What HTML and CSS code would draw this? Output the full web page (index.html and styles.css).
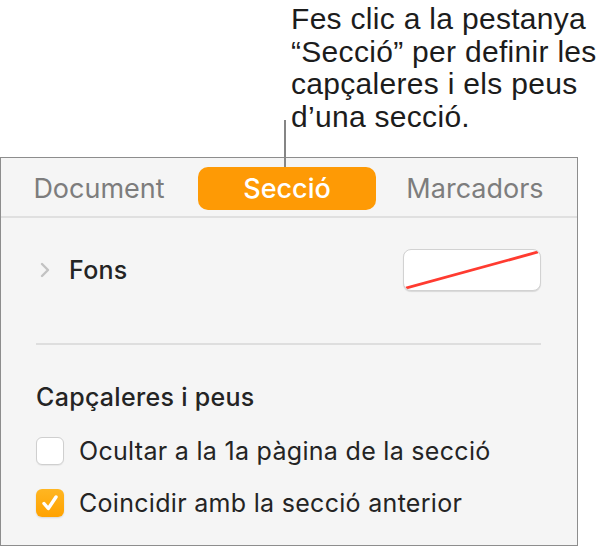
FILE: index.html
```html
<!DOCTYPE HTML>
<html>
<head>
<title>Secció</title>
<link rel="stylesheet" href="styles.css">
</head>
<body>
<div class="page">
  <div class="callout">
    Fes clic a la pestanya<br/>
    “Secció” per definir les<br/>
    capçaleres i els peus<br/>
    d’una secció.
  </div>
  <div class="leader"></div>

  <div class="panel">
    <div class="tabs">
      <div class="tab">Document</div>
      <div class="tab active">Secció</div>
      <div class="tab">Marcadors</div>
    </div>

    <div class="panelBody">
      <div class="fonsRow">
        <span class="chevron">
          <svg width="10" height="16" viewBox="0 0 10 16"><path d="M2 2 L8 8 L2 14" fill="none" stroke="#c2c2c2" stroke-width="2.4" stroke-linecap="round" stroke-linejoin="round"/></svg>
        </span>
        <span class="fonsLabel">Fons</span>
        <span class="swatch">
          <svg width="100%" height="100%" viewBox="0 0 136 40" preserveAspectRatio="none"><line x1="1" y1="39" x2="135" y2="1" stroke="#ff3b30" stroke-width="3"/></svg>
        </span>
      </div>

      <div class="divider"></div>

      <div class="heading">Capçaleres i peus</div>

      <div class="checkRow">
        <span class="box"></span>
        <span>Ocultar a la 1a pàgina de la secció</span>
      </div>
      <div class="checkRow">
        <span class="box checked">
          <svg width="28" height="28" viewBox="0 0 28 28"><path d="M8 14.5 L12.3 19.5 L20 8" fill="none" stroke="#fff" stroke-width="3.4" stroke-linecap="round" stroke-linejoin="round"/></svg>
        </span>
        <span>Coincidir amb la secció anterior</span>
      </div>
    </div>
  </div>
</div>
</body>
</html>
```

FILE: styles.css
```css
body {
  margin: 0;
  background: #ffffff;
}

.page {
  position: relative;
  width: 601px;
  height: 548px;
}

.callout {
  margin-left: 291px;
  padding-top: 3px;
  font-family: "Liberation Sans", Arial, sans-serif;
  font-size: 30px;
  line-height: 32.5px;
  letter-spacing: 0.3px;
  color: #1c1c1c;
}

/* the pointer from the callout down to the tab */
.leader {
  position: absolute;
  left: 284px;
  top: 120px;
  width: 2px;
  height: 47px;
  background: #858585;
  z-index: 2;
}

.panel {
  box-sizing: border-box;
  margin-top: 24px;
  width: 578px;
  height: 389px;
  border: 1px solid #8d8d8d;
  background: #f5f5f5;
  font-family: Inter, "Noto Sans", sans-serif;
  color: #242424;
}

.tabs {
  box-sizing: border-box;
  display: grid;
  grid-template-columns: 1fr 1fr 1fr;
  align-items: start;
  height: 60px;
  padding: 9px 8px 0 4px;
  border-bottom: 2px solid #e0e0e0;
}

.tab {
  justify-self: center;
  height: 43px;
  line-height: 43px;
  font-size: 27px;
  color: #7d7d7d;
}

.tab.active {
  width: 178px;
  text-align: center;
  border-radius: 10px;
  background: #fe9a05;
  color: #ffffff;
  font-weight: 500;
}

.panelBody {
  padding: 0 36px 0 35px;
}

.fonsRow {
  display: flex;
  align-items: center;
  padding-top: 31px;
}

.chevron {
  display: flex;
  width: 33px;
  padding-left: 4px;
  box-sizing: border-box;
}

.fonsLabel {
  flex: 1;
  font-size: 25px;
  font-weight: 500;
  letter-spacing: 0.3px;
}

.swatch {
  box-sizing: border-box;
  width: 138px;
  height: 42px;
  padding: 1px;
  background: #ffffff;
  border: 1px solid #d2d2d2;
  border-radius: 8px;
  box-shadow: 0 1px 1px rgba(0, 0, 0, 0.12);
  overflow: hidden;
}

.swatch svg {
  display: block;
}

.divider {
  margin-top: 52px;
  height: 2px;
  background: #dedede;
}

.heading {
  margin-top: 37px;
  font-size: 25px;
  line-height: 30px;
  font-weight: 500;
  letter-spacing: 0.3px;
}

.checkRow {
  display: flex;
  align-items: center;
  gap: 15px;
  height: 52px;
  font-size: 25px;
  letter-spacing: 0.3px;
}

.heading + .checkRow {
  margin-top: 13px;
}

.box {
  box-sizing: border-box;
  width: 28px;
  height: 28px;
  border-radius: 6px;
  background: #ffffff;
  border: 1px solid #cfcfcf;
  box-shadow: 0 1px 1px rgba(0, 0, 0, 0.06);
}

.box.checked {
  border: none;
  background: linear-gradient(to bottom, #ffb622, #ffa200);
  box-shadow: 0 1px 2px rgba(0, 0, 0, 0.12);
}

.box svg {
  display: block;
}
```
